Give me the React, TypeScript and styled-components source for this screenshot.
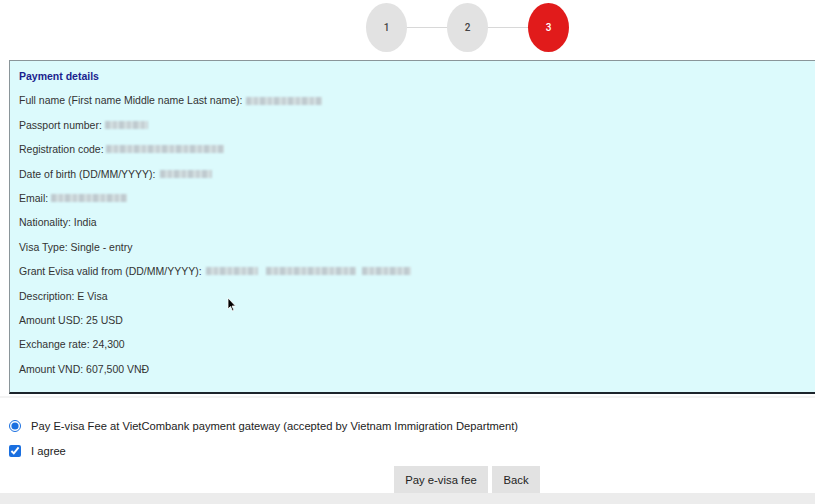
import React from "react";
import styled, { createGlobalStyle } from "styled-components";

const Global = createGlobalStyle`
  html, body { margin: 0; padding: 0; background: #ffffff; overflow: hidden; }
  body { font-family: "Liberation Sans", Arial, Helvetica, sans-serif; color: #333; }
`;

const Page = styled.div`
  width: 815px;
  height: 504px;
  position: relative;
  overflow: hidden;
  display: flex;
  flex-direction: column;
`;

const Stepper = styled.div`
  display: flex;
  align-items: center;
  padding: 2px 0 0 366px;
  height: 50px;
`;

const Step = styled.div<{ $active?: boolean }>`
  width: 41px;
  height: 49px;
  border-radius: 50%;
  background: ${(p) => (p.$active ? "#e11b1b" : "#e2e2e2")};
  color: ${(p) => (p.$active ? "#ffffff" : "#444")};
  font-size: 10px;
  font-weight: 500;
  font-family: Roboto, "Liberation Sans", sans-serif;
  display: flex;
  align-items: center;
  justify-content: center;
  flex: none;
`;

const Connector = styled.div`
  width: 40px;
  height: 1px;
  background: #d8d8d8;
`;

const Details = styled.div`
  margin: 8px -30px 0 9px;
  background: #dcfafc;
  border-top: 1px solid #8a9599;
  border-left: 1px solid #8a9599;
  border-bottom: 2px solid #1c242b;
  padding: 3px 0 11px 9px;
  height: 317px;
  box-sizing: content-box;
`;

const Title = styled.div`
  font-weight: bold;
  color: #1b1f8e;
  font-size: 10.5px;
  line-height: 24.4px;
`;

const Row = styled.div`
  font-size: 10.5px;
  line-height: 24.4px;
  color: #333;
  display: flex;
  align-items: center;
  white-space: pre;
`;

const Blur = styled.span<{ $w: number; $ml?: number }>`
  display: inline-block;
  width: ${(p) => p.$w}px;
  height: 8px;
  margin-left: ${(p) => p.$ml ?? 3}px;
  background: repeating-linear-gradient(
    90deg,
    #bfcacf 0px,
    #bfcacf 5px,
    #d3dfe1 5px,
    #d3dfe1 8px,
    #c6d0d4 8px,
    #c6d0d4 12px,
    #d8e5e7 12px,
    #d8e5e7 14px
  );
  filter: blur(0.8px);
`;

const Separator = styled.div`
  height: 2px;
  margin-top: 2px;
  background: #f3f3f3;
`;

const Options = styled.div`
  display: flex;
  flex-direction: column;
  padding: 18px 0 0 9px;
  gap: 6px;
`;

const Option = styled.label`
  display: flex;
  align-items: center;
  gap: 10px;
  font-size: 11.2px;
  color: #222;
  height: 19px;
`;

const Radio = styled.input`
  width: 12px;
  height: 12px;
  margin: 0;
  accent-color: #1a6fe0;
`;

const Check = styled.input`
  width: 12px;
  height: 12px;
  margin: 0;
  accent-color: #1a6fe0;
`;

const Actions = styled.div`
  display: flex;
  gap: 4px;
  padding: 6px 0 0 394px;
`;

const Button = styled.button<{ $w: number }>`
  width: ${(p) => p.$w}px;
  height: 27px;
  border: none;
  background: #e2e2e2;
  color: #222;
  font-family: "Liberation Sans", Arial, sans-serif;
  font-size: 11.3px;
  padding: 0;
`;

const Footer = styled.div`
  flex: 1;
  background: #ececec;
`;

const Cursor = styled.svg`
  position: absolute;
  left: 227px;
  top: 297px;
`;

export default function App() {
  return (
    <Page>
      <Global />
      <Stepper>
        <Step>1</Step>
        <Connector />
        <Step>2</Step>
        <Connector />
        <Step $active>3</Step>
      </Stepper>
      <Details>
        <Title>Payment details</Title>
        <Row>Full name (First name Middle name Last name):<Blur $w={76} /></Row>
        <Row>Passport number:<Blur $w={43} /></Row>
        <Row>Registration code:<Blur $w={118} $ml={2} /></Row>
        <Row>Date of birth (DD/MM/YYYY):<Blur $w={52} $ml={4} /></Row>
        <Row>Email:<Blur $w={76} /></Row>
        <Row>Nationality: India</Row>
        <Row>Visa Type: Single - entry</Row>
        <Row>
          Grant Evisa valid from (DD/MM/YYYY):<Blur $w={52} $ml={4} />
          <Blur $w={90} $ml={8} />
          <Blur $w={49} $ml={6} />
        </Row>
        <Row>Description: E Visa</Row>
        <Row>Amount USD: 25 USD</Row>
        <Row>Exchange rate: 24,300</Row>
        <Row>Amount VND: 607,500 VNĐ</Row>
      </Details>
      <Separator />
      <Options>
        <Option>
          <Radio type="radio" defaultChecked name="pay" />
          Pay E-visa Fee at VietCombank payment gateway (accepted by Vietnam Immigration Department)
        </Option>
        <Option>
          <Check type="checkbox" defaultChecked />
          I agree
        </Option>
      </Options>
      <Actions>
        <Button $w={94}>Pay e-visa fee</Button>
        <Button $w={48}>Back</Button>
      </Actions>
      <Footer />
      <Cursor width="10" height="15" viewBox="0 0 10 15">
        <path d="M1 1 L1 12 L3.5 9.5 L5.5 14 L7 13.3 L5 9 L8.5 9 Z" fill="#000" stroke="#fff" strokeWidth="0.8" />
      </Cursor>
    </Page>
  );
}
